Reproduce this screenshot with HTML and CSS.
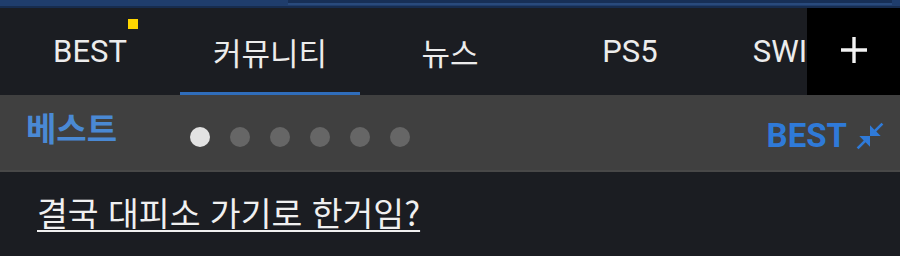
FILE: index.html
```html
<!DOCTYPE html>
<html lang="ko">
<head>
<meta charset="utf-8">
<link rel="stylesheet" href="styles.css">
</head>
<body>
<div class="topstrip">
  <div class="topstrip-panel"></div>
</div>
<nav class="tabbar">
  <div class="tabs">
    <div class="tab"><span class="tab-label">BEST<span class="newdot"></span></span></div>
    <div class="tab active"><span class="tab-label">커뮤니티</span></div>
    <div class="tab"><span class="tab-label">뉴스</span></div>
    <div class="tab"><span class="tab-label">PS5</span></div>
    <div class="tab"><span class="tab-label">SWITCH</span></div>
  </div>
  <div class="addbtn">
    <svg width="26" height="26" viewBox="0 0 26 26"><path d="M13 0v26M0 13h26" stroke="#f2f2f2" stroke-width="3.4" fill="none"/></svg>
  </div>
</nav>
<section class="bestbar">
  <div class="best-title">베스트</div>
  <div class="dots">
    <span class="dot on"></span>
    <span class="dot"></span>
    <span class="dot"></span>
    <span class="dot"></span>
    <span class="dot"></span>
    <span class="dot"></span>
  </div>
  <div class="best-right">
    <span class="best-label">BEST</span>
    <svg class="shrink" width="32" height="32" viewBox="0 0 24 24"><path fill="#2f7ad8" d="M22 3.41L16.71 8.7 20 12h-8V4l3.29 3.29L20.59 2 22 3.41zM3.41 22l5.29-5.29L12 20v-8H4l3.29 3.29L2 20.59 3.41 22z"/></svg>
  </div>
</section>
<main class="content">
  <a class="post-title" href="#">결국 대피소 가기로 한거임?</a>
</main>
</body>
</html>
```

FILE: styles.css
```css
html, body {
  margin: 0;
  padding: 0;
  background: #1b1d22;
  width: 900px;
  height: 256px;
  overflow: hidden;
  font-family: Roboto, "Noto Sans CJK KR", sans-serif;
}

.topstrip {
  height: 6px;
  background: #1f3d6c;
  border-bottom: 2px solid #172c4e;
  display: flex;
}

.topstrip-panel {
  margin-left: 288px;
  width: 604px;
  height: 3px;
  background: #172f56;
  border-bottom: 2px solid #294a7c;
}

.tabbar {
  height: 87px;
  display: flex;
  background: #1b1d22;
}

.tabs {
  flex: 1;
  display: flex;
  overflow: hidden;
}

.tab {
  flex: 0 0 180px;
  display: flex;
  align-items: center;
  justify-content: center;
  color: #ececec;
  font-size: 31px;
  box-sizing: border-box;
  border-bottom: 3px solid transparent;
  padding-top: 3px;
}

.tab.active {
  border-bottom-color: #2f6dbb;
}

.tab-label {
  position: relative;
  white-space: nowrap;
}

.newdot {
  position: absolute;
  right: -11px;
  top: -14px;
  width: 10px;
  height: 10px;
  background: #ffd600;
}

.addbtn {
  flex: 0 0 93px;
  background: #000;
  display: flex;
  align-items: center;
  justify-content: center;
  padding-bottom: 3px;
  box-sizing: border-box;
}

.bestbar {
  height: 75px;
  background: #404040;
  border-bottom: 2px solid #484848;
  display: flex;
  align-items: center;
  padding: 0 14px 0 26px;
}

.best-title {
  color: #4a89d4;
  font-family: "Noto Sans CJK KR", sans-serif;
  font-weight: 700;
  font-size: 33px;
  line-height: 1;
  margin-top: -10px;
  width: 164px;
}

.dots {
  display: flex;
  gap: 20px;
  margin-top: 8px;
}

.dot {
  width: 20px;
  height: 20px;
  border-radius: 50%;
  background: #666;
}

.dot.on {
  background: #e2e2e2;
}

.best-right {
  margin-left: auto;
  display: flex;
  align-items: center;
  gap: 7px;
  margin-top: 6px;
}

.best-label {
  color: #2f7ad8;
  font-weight: 700;
  font-size: 33px;
}

.content {
  padding: 15px 0 0 37px;
}

.post-title {
  color: #f0f0f0;
  font-family: "Noto Sans CJK KR", sans-serif;
  font-size: 33.5px;
  text-decoration: underline;
  text-decoration-thickness: 2px;
  text-underline-offset: 4px;
}
```
